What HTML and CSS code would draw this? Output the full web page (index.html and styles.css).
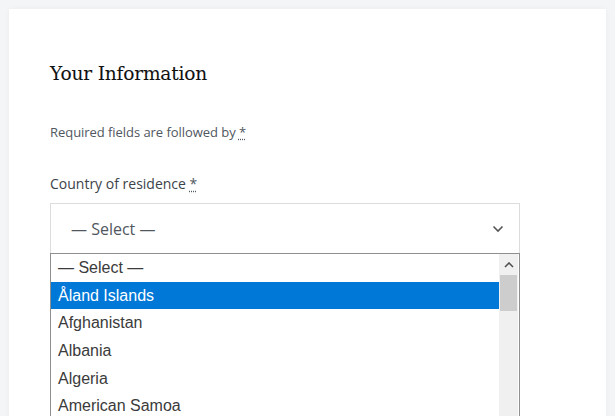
FILE: index.html
```html
<!DOCTYPE html>
<html lang="en">
<head>
<meta charset="utf-8">
<title>Your Information</title>
<link rel="stylesheet" href="styles.css">
</head>
<body>
<main class="card">
  <h2 class="title">Your Information</h2>
  <p class="note">Required fields are followed by <abbr class="req" title="required">*</abbr></p>
  <div class="field">
    <label class="label">Country of residence <abbr class="req" title="required">*</abbr></label>
    <div class="select-wrap">
      <div class="select">
        <span class="select-value">— Select —</span>
        <svg class="chev" width="12" height="8" viewBox="0 0 12 8"><path d="M1.5 1.5 L6 6 L10.5 1.5" fill="none" stroke="#555" stroke-width="1.6"/></svg>
      </div>
      <div class="listbox">
        <ul class="options">
          <li class="opt">— Select —</li>
          <li class="opt sel">Åland Islands</li>
          <li class="opt">Afghanistan</li>
          <li class="opt">Albania</li>
          <li class="opt">Algeria</li>
          <li class="opt">American Samoa</li>
          <li class="opt">Andorra</li>
        </ul>
        <div class="scrollbar">
          <div class="sb-btn">
            <svg width="10" height="6" viewBox="0 0 10 6"><path d="M1 5 L5 1 L9 5" fill="none" stroke="#505050" stroke-width="1.6"/></svg>
          </div>
          <div class="sb-thumb"></div>
        </div>
      </div>
    </div>
  </div>
</main>
</body>
</html>
```

FILE: styles.css
```css
html, body {
  margin: 0;
  padding: 0;
}
body {
  background: #f4f5f7;
  padding: 9px 9px 0;
  height: 416px;
  box-sizing: border-box;
  overflow: hidden;
}
.card {
  background: #fff;
  box-shadow: 0 0 6px rgba(0,0,0,0.04);
  padding: 52px 41px 40px;
  min-height: 500px;
}
.title {
  font-family: "DejaVu Serif", serif;
  font-weight: normal;
  font-size: 18.6px;
  line-height: 26px;
  color: #111;
  margin: 0 0 36px;
  letter-spacing: -0.2px;
  -webkit-text-stroke: 0.08px #111;
}
.note {
  font-family: "Open Sans", sans-serif;
  font-size: 13px;
  line-height: 18px;
  color: #50575e;
  margin: 0 0 33px;
  letter-spacing: -0.05px;
}
.req {
  text-decoration: underline dotted;
  text-underline-offset: 2px;
  color: #50575e;
}
.label {
  display: block;
  font-family: "Open Sans", sans-serif;
  font-size: 14px;
  line-height: 20px;
  color: #3c434a;
  margin-bottom: 9px;
}
.select-wrap {
  position: relative;
  width: 470px;
}
.select {
  box-sizing: border-box;
  height: 51px;
  border: 1px solid #dcdcde;
  display: flex;
  align-items: center;
  justify-content: space-between;
  padding: 0 15px 0 20px;
  font-family: "Open Sans", sans-serif;
  font-size: 16px;
  color: #50575e;
}
.chev {
  display: block;
}
.listbox {
  position: absolute;
  left: 0;
  top: 50px;
  width: 470px;
  height: 200px;
  box-sizing: border-box;
  border: 1px solid #8f8f8f;
  background: #fff;
  display: flex;
}
.options {
  list-style: none;
  margin: 0;
  padding: 0;
  flex: 1;
  font-family: "Liberation Sans", Arial, sans-serif;
  font-size: 16px;
  color: #3b3b3b;
}
.opt {
  height: 27.7px;
  line-height: 27.7px;
  padding-left: 7px;
  white-space: nowrap;
}
.opt.sel {
  background: #0078d7;
  color: #fff;
}
.scrollbar {
  width: 19px;
  margin-right: 1px;
  background: #f0f0f0;
  display: flex;
  flex-direction: column;
}
.sb-btn {
  height: 21px;
  display: flex;
  align-items: center;
  justify-content: center;
}
.sb-btn svg {
  display: block;
}
.sb-thumb {
  height: 36px;
  background: #cdcdcd;
  margin: 0 1px;
}
```
